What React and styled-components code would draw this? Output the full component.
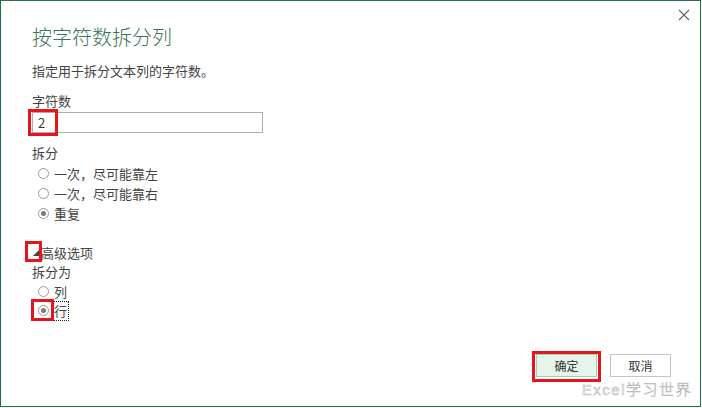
import React from "react";
import styled, { createGlobalStyle } from "styled-components";

const Global = createGlobalStyle`
  html, body { margin: 0; padding: 0; background: #fff; }
  body { font-family: "Noto Sans CJK SC", "Noto Sans", sans-serif; color: #444; }
`;

const Dialog = styled.div`
  position: relative;
  box-sizing: border-box;
  width: 701px;
  height: 407px;
  border: 1px solid #217346;
  background: #fff;
  padding: 22px 0 0 31px;
  display: flex;
  flex-direction: column;
`;

const Close = styled.button`
  position: absolute;
  top: 8px;
  right: 10px;
  width: 12px;
  height: 12px;
  padding: 0;
  border: 0;
  background: none;
  svg { display: block; }
`;

const Title = styled.h1`
  margin: 0;
  font-size: 20px;
  line-height: 28px;
  font-weight: 300;
  color: #3a7556;
`;

const Text = styled.div`
  font-size: 13px;
  line-height: 20px;
  margin-top: ${(p) => p.$mt || 0}px;
`;

const Field = styled.div`
  position: relative;
  margin-top: 1px;
  width: 231px;
  height: 21px;
  box-sizing: border-box;
  border: 1px solid #ababab;
  font-size: 13px;
  line-height: 19px;
  padding-left: 5px;
  color: #333;
`;

const Mark = styled.span`
  position: absolute;
  box-sizing: border-box;
  border: 3px solid #e8141c;
  left: ${(p) => p.$x}px;
  top: ${(p) => p.$y}px;
  width: ${(p) => p.$w}px;
  height: ${(p) => p.$h}px;
  pointer-events: none;
`;

const Option = styled.label`
  position: relative;
  display: flex;
  align-items: center;
  gap: 5px;
  height: ${(p) => p.$h || 20}px;
  padding-left: 6px;
  font-size: 13px;
  color: #444;
`;

const Radio = styled.span`
  width: 9px;
  height: 9px;
  border-radius: 50%;
  border: 1px solid #9a9a9a;
  display: flex;
  align-items: center;
  justify-content: center;
  &::after {
    content: "";
    width: 5px;
    height: 5px;
    border-radius: 50%;
    background: ${(p) => (p.$on ? "#7a7a7a" : "transparent")};
  }
`;

const Focus = styled.span`
  outline: 1px dotted #222;
  outline-offset: 1px;
  line-height: 16px;
`;

const Expander = styled.div`
  position: relative;
  display: flex;
  align-items: center;
  height: 20px;
  margin-top: 19px;
  font-size: 13px;
  gap: 2px;
`;

const Tri = styled.span`
  width: 0;
  height: 0;
  margin-left: 1px;
  margin-top: 2px;
  border-left: 6px solid transparent;
  border-bottom: 6px solid #444;
`;

const Footer = styled.div`
  margin-top: auto;
  margin-bottom: 29px;
  margin-right: 29px;
  display: flex;
  justify-content: flex-end;
  gap: 13px;
`;

const Button = styled.button`
  position: relative;
  width: 61px;
  height: 23px;
  box-sizing: border-box;
  border: 1px solid ${(p) => (p.$primary ? "#9ed4b2" : "#c4c4c4")};
  background: ${(p) => (p.$primary ? "#e6f4ea" : "#fff")};
  font-family: inherit;
  font-size: 12px;
  color: #333;
  padding: 0;
`;

const Watermark = styled.div`
  position: absolute;
  right: 8px;
  bottom: 7px;
  font-family: "Liberation Sans", "Noto Sans CJK SC", sans-serif;
  font-size: 15px;
  font-weight: 300;
  letter-spacing: 1.5px;
  color: #f2f2f2;
  -webkit-text-stroke: 0.5px #b4b4b4;
`;

export default function App() {
  return (
    <>
      <Global />
      <Dialog>
        <Close aria-label="close">
          <svg width="12" height="12" viewBox="0 0 12 12">
            <path d="M1 1L11 11M11 1L1 11" stroke="#666" strokeWidth="1.2" />
          </svg>
        </Close>
        <Title>按字符数拆分列</Title>
        <Text $mt={10}>指定用于拆分文本列的字符数。</Text>
        <Text $mt={10}>字符数</Text>
        <Field>
          2
          <Mark $x={-5} $y={-4} $w={30} $h={27} />
        </Field>
        <Text $mt={10}>拆分</Text>
        <Option><Radio />一次，尽可能靠左</Option>
        <Option><Radio />一次，尽可能靠右</Option>
        <Option><Radio $on />重复</Option>
        <Expander>
          <Tri />
          高级选项
          <Mark $x={-7} $y={-1} $w={17} $h={21} />
        </Expander>
        <Text>拆分为</Text>
        <Option $h={19}><Radio />列</Option>
        <Option $h={19}>
          <Radio $on />
          <Focus>行</Focus>
          <Mark $x={-1} $y={-2} $w={23} $h={22} />
        </Option>
        <Footer>
          <Button $primary>
            确定
            <Mark $x={-5} $y={-4} $w={69} $h={31} />
          </Button>
          <Button>取消</Button>
        </Footer>
        <Watermark>Excel学习世界</Watermark>
      </Dialog>
    </>
  );
}
